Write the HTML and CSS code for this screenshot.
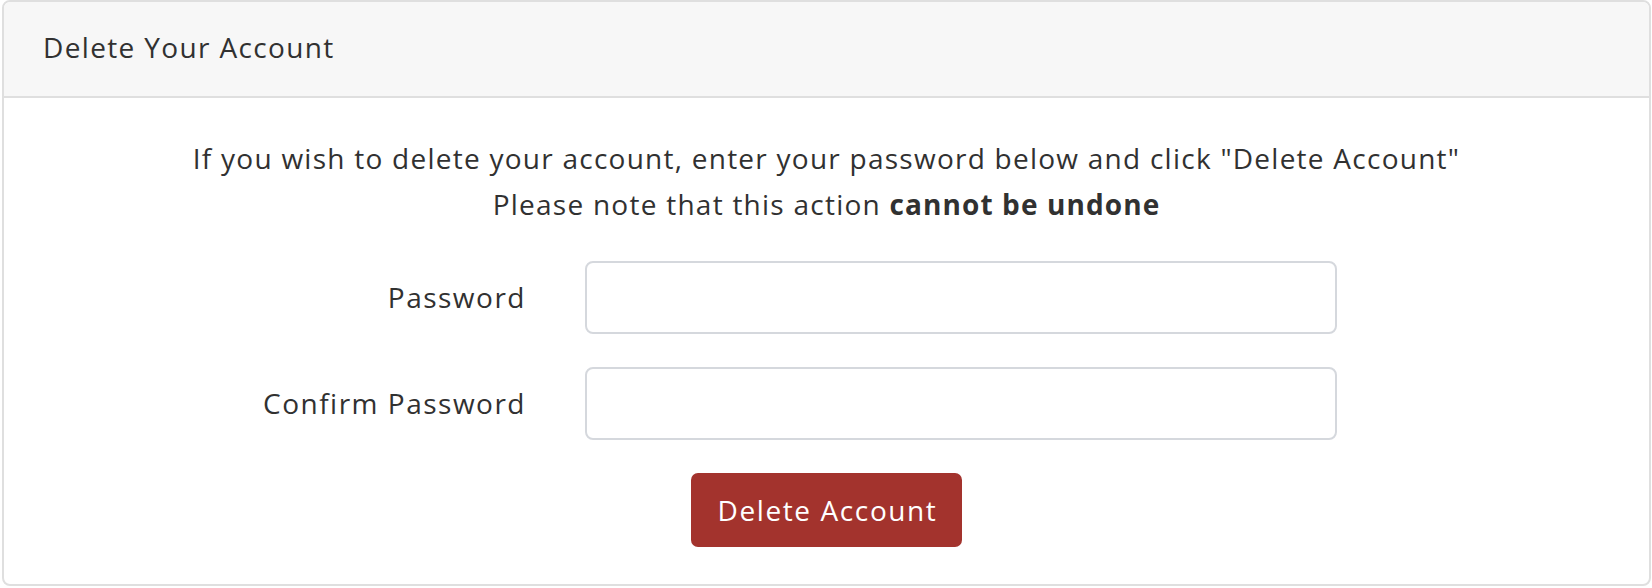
FILE: index.html
```html
<!DOCTYPE html>
<html lang="en">
<head>
<meta charset="utf-8">
<title>Delete Your Account</title>
<link rel="stylesheet" href="styles.css">
</head>
<body>
<div class="card">
  <div class="card-header">Delete Your Account</div>
  <div class="card-body">
    <p class="intro">If you wish to delete your account, enter your password below and click "Delete Account"<br>Please note that this action <strong>cannot be undone</strong></p>
    <form class="form">
      <label class="label" for="pw">Password</label>
      <input class="input" id="pw" type="password">
      <label class="label" for="pw2">Confirm Password</label>
      <input class="input" id="pw2" type="password">
    </form>
    <div class="actions">
      <button class="btn" type="button">Delete Account</button>
    </div>
  </div>
</div>
</body>
</html>
```

FILE: styles.css
```css
* { box-sizing: border-box; }

html, body {
  margin: 0;
  padding: 0;
  background: #ffffff;
}

body {
  padding-left: 2px;
  font-family: "Open Sans", "Noto Sans", sans-serif;
  color: #313131;
  font-size: 28px;
  letter-spacing: 1.25px;
}

.card {
  width: 1649px;
  border: 2px solid #dfdfdf;
  border-radius: 8px;
  overflow: hidden;
  background: #ffffff;
}

.card-header {
  height: 96px;
  padding: 0 0 4px 39px;
  display: flex;
  align-items: center;
  background: #f7f7f7;
  border-bottom: 2px solid #dfdfdf;
  line-height: 40px;
  letter-spacing: 1.35px;
}

.card-body {
  padding: 37px 0 37px;
}

.intro {
  margin: 0 0 34px;
  text-align: center;
  line-height: 46px;
}

.intro strong {
  font-weight: 700;
  letter-spacing: 1.1px;
}

.form {
  display: grid;
  grid-template-columns: 521px 752px;
  column-gap: 60px;
  row-gap: 33px;
  align-items: center;
  margin: 0;
}

.label {
  text-align: right;
  padding-bottom: 2px;
  margin-right: -1px;
  letter-spacing: 1.5px;
}

.input {
  height: 73px;
  width: 752px;
  border: 2px solid #d5d8dd;
  border-radius: 8px;
  background: #ffffff;
  font: inherit;
  padding: 0 16px;
  outline: none;
}

.actions {
  display: flex;
  justify-content: center;
  margin-top: 33px;
}

.btn {
  height: 74px;
  padding: 0 25px 0 27px;
  border: none;
  border-radius: 7px;
  background: #a3332d;
  color: #ffffff;
  font-family: inherit;
  font-size: 28px;
  letter-spacing: 1.6px;
  cursor: pointer;
}
```
